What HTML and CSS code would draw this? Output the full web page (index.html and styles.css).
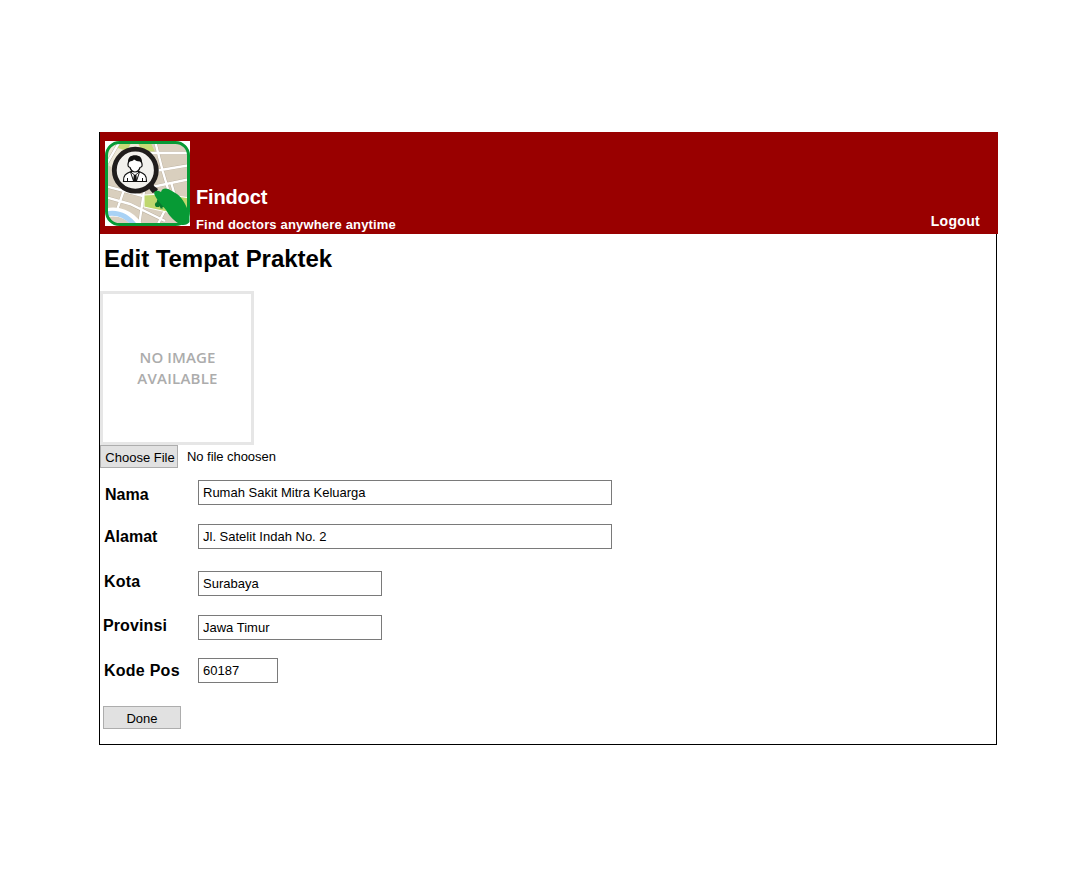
FILE: index.html
```html
<!DOCTYPE html>
<html lang="id">
<head>
<meta charset="utf-8">
<title>Findoct - Edit Tempat Praktek</title>
<link rel="stylesheet" href="styles.css">
</head>
<body>
<main class="frame">
  <header class="header">
    <svg class="logo" viewBox="0 0 85 85" aria-label="Findoct logo">
      <defs><clipPath id="tile"><rect x="1" y="1" width="83" height="83" rx="13"/></clipPath></defs>
      <rect width="85" height="85" fill="#fff"/>
      <g clip-path="url(#tile)">
        <rect width="85" height="85" fill="#d9cfbe"/>
        <path d="M9 0H40L36 11 22 36 0 22V8Z" fill="#eee9d8"/>
        <path d="M12 0H27L22 10 10 6ZM32 0H45L50 11 38 12Z" fill="#c6da75"/>
        <path d="M9 26L18 18 34 49 22 51Z" fill="#d5dfa0"/>
        <g fill="none" stroke="#b9ae9c" stroke-width="3.2">
          <path d="M36 12L85 12M44 31L85 24M47 46L85 38M50 0L58 31 63 48M0 45L38 55 85 77M0 56L25 63 60 80M20 46L11 72M39 50L34 85M60 69L52 85M66 41L70 55M0 26L15 0"/>
        </g>
        <g fill="none" stroke="#fff" stroke-width="2.4">
          <path d="M36 12L85 12M44 31L85 24M47 46L85 38M50 0L58 31 63 48M0 45L38 55 85 77M0 56L25 63 60 80M20 46L11 72M39 50L34 85M60 69L52 85M66 41L70 55M0 26L15 0"/>
        </g>
        <path d="M39 54L58 53 85 57V73L62 71 39 66Z" fill="#bfd76e" stroke="#fff" stroke-width="1"/>
        <path d="M0 72C13 69 25 73 33 85" fill="none" stroke="#fff" stroke-width="9"/>
        <path d="M0 73C13 70 23 75 31 86" fill="none" stroke="#a9d2f5" stroke-width="5"/>
        <g fill="#087b2e">
          <circle cx="52.6" cy="63.5" r="2.6"/><circle cx="54.5" cy="60.3" r="2.6"/><circle cx="57" cy="63.8" r="2.6"/>
          <path d="M54.5 63L58 67.5H55.5Z"/>
        </g>
      </g>
      <rect x="1.5" y="1.5" width="82" height="82" rx="13" fill="none" stroke="#079a35" stroke-width="3"/>
      <path d="M41 43L47 38 49 45 53 48 51 51 47.5 52 45 49Z" fill="#201d1c"/>
      <circle cx="30.3" cy="29.2" r="21" fill="#f2f1ed" stroke="#201d1c" stroke-width="4.8"/>
      <path d="M18.5 40.5C18 34 21 32.5 26 30.5L34 30.5C39 32.5 42 34 41.5 40.5Z" fill="#fff" stroke="#111" stroke-width="1.2"/>
      <path d="M26 31L30 34.5 34 31M22.5 37V40M37.5 37V40M25.5 31L28.5 40M34.5 31L31.5 40" fill="none" stroke="#111" stroke-width="1"/>
      <path d="M28.8 34H31.4L32 40H28Z" fill="#111"/>
      <path d="M23.5 21C22 25 23.5 26 25 26.5 26 29.5 28 31 30 31S34 29.5 35 26.5C37 26 38 25 36.5 21L34 16H26Z" fill="#fff" stroke="#111" stroke-width="1.2"/>
      <path d="M23.2 22.5C22 16.5 26 14.3 30 14.3S38 16.5 36.8 22.5L35 20.5C32 20.5 31 19.5 29 18.5 28 20 26 20 24.8 20.5Z" fill="#111"/>
      <path d="M49.3 53C48.5 49 53 49 56 51 57 46.5 62 46.5 66 49.5L72 53C78 57 81 65 84.5 72V81Q82 84.5 77 84C70 81 65 76 61 69 57 64 51 58 49.3 53Z" fill="#079a35"/>
    </svg>
    <div class="brand">
      <div class="brand-name">Findoct</div>
      <div class="tagline">Find doctors anywhere anytime</div>
    </div>
    <a class="logout">Logout</a>
  </header>
  <h1 class="title">Edit Tempat Praktek</h1>
  <div class="preview"><span class="preview-top">NO IMAGE</span><span class="preview-bottom">AVAILABLE</span></div>
  <div class="upload"><button class="button choose">Choose File</button><span class="file-name">No file choosen</span></div>
  <form class="form">
    <div class="row nama"><label class="label">Nama</label><input class="field" value="Rumah Sakit Mitra Keluarga"></div>
    <div class="row alamat"><label class="label">Alamat</label><input class="field" value="Jl. Satelit Indah No. 2"></div>
    <div class="row kota"><label class="label">Kota</label><input class="field medium" value="Surabaya"></div>
    <div class="row provinsi"><label class="label">Provinsi</label><input class="field medium" value="Jawa Timur"></div>
    <div class="row kode"><label class="label">Kode Pos</label><input class="field small" value="60187"></div>
    <button class="button done" type="button">Done</button>
  </form>
</main>
</body>
</html>
```
FILE: styles.css
```css
* { box-sizing: border-box; }
body { margin: 0; background: #fff; color: #000; font-family: "Liberation Sans", Arial, sans-serif; }
.frame { width: 898px; height: 613px; margin: 132px 0 0 99px; border: solid #000; border-width: 0 1px 1px; }
.header { display: flex; height: 102px; margin-right: -2px; padding: 9px 18px 0 5px; background: #900; color: #fff; font-weight: bold; }
.logo { display: block; flex: none; width: 85px; height: 85px; }
.brand { flex: 1; padding: 44px 0 0 6px; }
.brand-name { font-size: 20px; line-height: 24px; letter-spacing: -.15px; }
.tagline { margin-top: 8px; font-size: 13px; line-height: 16px; letter-spacing: .17px; }
.logout { padding-top: 71px; font-size: 14px; line-height: 18px; letter-spacing: .3px; }
.title { height: 57px; margin: 0; padding: 10px 0 0 4px; font-size: 24px; line-height: 30px; letter-spacing: -.05px; }
.preview { display: flex; flex-direction: column; align-items: center; width: 154px; height: 154px; padding-top: 53px; border: 3px solid #e6e6e6; color: #acacac; font: 600 15px/21px "Open Sans", sans-serif; }
.preview-top { padding-left: 1px; letter-spacing: .1px; }
.preview-bottom { padding-left: 1px; letter-spacing: .25px; }
.upload { display: flex; height: 23px; }
.button { height: 23px; border: 1px solid #adadad; background: #e1e1e1; color: #000; font: 13px/21px "Liberation Sans", Arial, sans-serif; padding: 0; white-space: nowrap; }
.choose { width: 78px; padding: 1px 0 0 2px; }
.file-name { margin-left: 9px; font-size: 13px; line-height: 23px; letter-spacing: -.05px; }
.form { padding-top: 12px; }
.row { display: flex; height: 25px; padding-left: 4px; }
.label { width: 94px; font-size: 16px; font-weight: bold; line-height: 25px; }
.field { width: 414px; height: 25px; padding: 0 4px; border: 1px solid #7a7a7a; background: #fff; color: #000; font: 13px "Liberation Sans", Arial, sans-serif; }
.medium { width: 184px; }
.small { width: 80px; }
.nama { padding-left: 5px; }
.nama .label { width: 93px; padding-top: 2px; }
.alamat { margin-top: 19px; }
.kota { margin-top: 22px; }
.kota .label { line-height: 21px; letter-spacing: .2px; }
.provinsi { margin-top: 19px; padding-left: 3px; }
.provinsi .label { width: 95px; line-height: 21px; letter-spacing: .1px; }
.kode { margin-top: 18px; }
.kode .label { letter-spacing: .25px; }
.done { display: block; width: 78px; margin: 23px 0 0 3px; padding-top: 1px; }
```
